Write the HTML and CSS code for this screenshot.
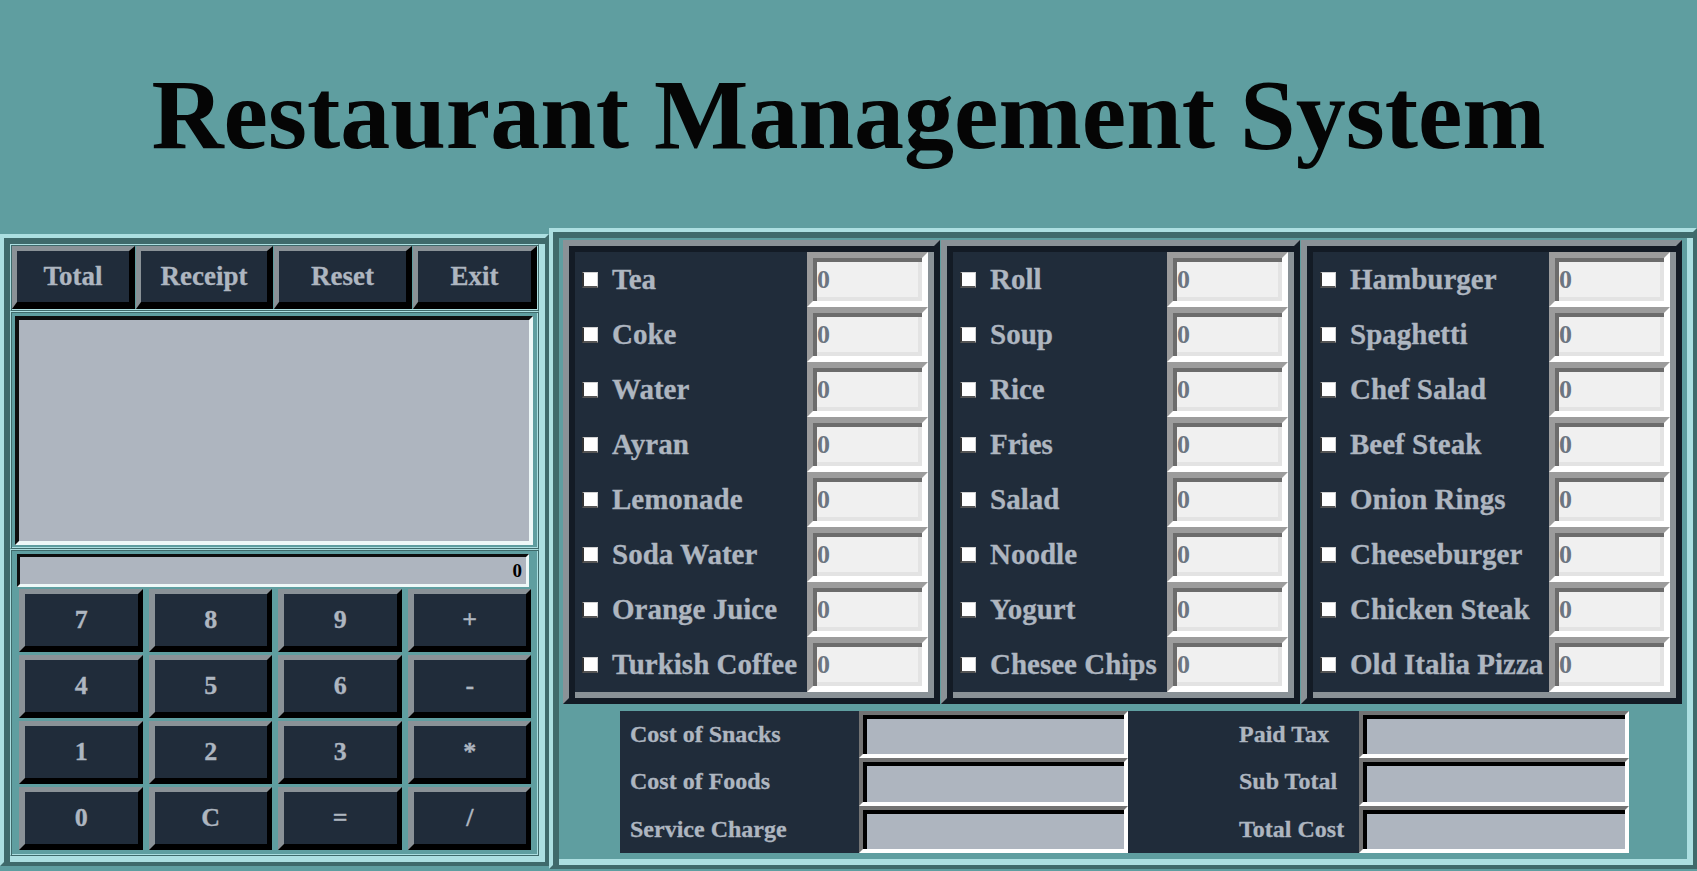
FILE: index.html
```html
<!DOCTYPE html>
<html lang="en">
<head>
    <meta charset="UTF-8">
    <meta name="viewport" content="width=device-width, initial-scale=1.0">
    <title>Restaurant Management System</title>
    <link rel="stylesheet" href="styles.css">
</head>
<body>

    <div class="title-bar">
        <h1>Restaurant Management System</h1>
    </div>

    <div class="workspace">

        <!-- Left: actions, receipt, calculator -->
        <div class="left-frame">
            <div class="action-bar">
                <button class="action-button">Total</button>
                <button class="action-button">Receipt</button>
                <button class="action-button">Reset</button>
                <button class="action-button">Exit</button>
            </div>

            <div class="receipt-frame">
                <textarea class="receipt"></textarea>
            </div>

            <div class="calc-frame">
                <input type="text" class="calc-display" value="0" readonly>
                <div class="calc-keys">
                    <button class="key">7</button>
                    <button class="key">8</button>
                    <button class="key">9</button>
                    <button class="key">+</button>
                    <button class="key">4</button>
                    <button class="key">5</button>
                    <button class="key">6</button>
                    <button class="key">-</button>
                    <button class="key">1</button>
                    <button class="key">2</button>
                    <button class="key">3</button>
                    <button class="key">*</button>
                    <button class="key">0</button>
                    <button class="key">C</button>
                    <button class="key">=</button>
                    <button class="key">/</button>
                </div>
            </div>
        </div>

        <!-- Right: menu and costs -->
        <div class="right-frame">
            <div class="menu-row">
                <div class="menu-panel drinks">
                    <label class="item"><input type="checkbox">Tea</label>
                    <input type="text" class="qty" value="0">
                    <label class="item"><input type="checkbox">Coke</label>
                    <input type="text" class="qty" value="0">
                    <label class="item"><input type="checkbox">Water</label>
                    <input type="text" class="qty" value="0">
                    <label class="item"><input type="checkbox">Ayran</label>
                    <input type="text" class="qty" value="0">
                    <label class="item"><input type="checkbox">Lemonade</label>
                    <input type="text" class="qty" value="0">
                    <label class="item"><input type="checkbox">Soda Water</label>
                    <input type="text" class="qty" value="0">
                    <label class="item"><input type="checkbox">Orange Juice</label>
                    <input type="text" class="qty" value="0">
                    <label class="item"><input type="checkbox">Turkish Coffee</label>
                    <input type="text" class="qty" value="0">
                </div>

                <div class="menu-panel snacks">
                    <label class="item"><input type="checkbox">Roll</label>
                    <input type="text" class="qty" value="0">
                    <label class="item"><input type="checkbox">Soup</label>
                    <input type="text" class="qty" value="0">
                    <label class="item"><input type="checkbox">Rice</label>
                    <input type="text" class="qty" value="0">
                    <label class="item"><input type="checkbox">Fries</label>
                    <input type="text" class="qty" value="0">
                    <label class="item"><input type="checkbox">Salad</label>
                    <input type="text" class="qty" value="0">
                    <label class="item"><input type="checkbox">Noodle</label>
                    <input type="text" class="qty" value="0">
                    <label class="item"><input type="checkbox">Yogurt</label>
                    <input type="text" class="qty" value="0">
                    <label class="item"><input type="checkbox">Chesee Chips</label>
                    <input type="text" class="qty" value="0">
                </div>

                <div class="menu-panel foods">
                    <label class="item"><input type="checkbox">Hamburger</label>
                    <input type="text" class="qty" value="0">
                    <label class="item"><input type="checkbox">Spaghetti</label>
                    <input type="text" class="qty" value="0">
                    <label class="item"><input type="checkbox">Chef Salad</label>
                    <input type="text" class="qty" value="0">
                    <label class="item"><input type="checkbox">Beef Steak</label>
                    <input type="text" class="qty" value="0">
                    <label class="item"><input type="checkbox">Onion Rings</label>
                    <input type="text" class="qty" value="0">
                    <label class="item"><input type="checkbox">Cheeseburger</label>
                    <input type="text" class="qty" value="0">
                    <label class="item"><input type="checkbox">Chicken Steak</label>
                    <input type="text" class="qty" value="0">
                    <label class="item"><input type="checkbox">Old Italia Pizza</label>
                    <input type="text" class="qty" value="0">
                </div>
            </div>

            <div class="cost-frame">
                <span class="cost-label">Cost of Snacks</span>
                <input type="text" class="cost-field" readonly>
                <span class="cost-label right">Paid Tax</span>
                <input type="text" class="cost-field" readonly>

                <span class="cost-label">Cost of Foods</span>
                <input type="text" class="cost-field" readonly>
                <span class="cost-label right">Sub Total</span>
                <input type="text" class="cost-field" readonly>

                <span class="cost-label">Service Charge</span>
                <input type="text" class="cost-field" readonly>
                <span class="cost-label right">Total Cost</span>
                <input type="text" class="cost-field" readonly>
            </div>
        </div>

    </div>

</body>
</html>
```

FILE: styles.css
```css
body {
    margin: 0;
    background-color: #5f9ea0;
    font-family: "Liberation Serif", "Times New Roman", serif;
    overflow: hidden;
}

.title-bar {
    height: 228px;
    box-sizing: border-box;
    padding-top: 57px;
    text-align: center;
}

.title-bar h1 {
    margin: 0;
    font-size: 100px;
    line-height: 115px;
    font-weight: bold;
    color: #050505;
}

.workspace {
    display: flex;
    align-items: flex-start;
}

/* Ridge frames */
.left-frame, .right-frame {
    box-sizing: border-box;
    border: 4px solid;
    border-color: #acdfe1 #3f6a6b #3f6a6b #acdfe1;
    box-shadow: inset 6px 6px 0 #3f6a6b, inset -6px -6px 0 #acdfe1;
}

.left-frame {
    width: 549px;
    height: 632px;
    margin-top: 6px;
    padding: 6px;
    display: flex;
    flex-direction: column;
}

.action-bar, .receipt-frame, .calc-frame {
    box-sizing: border-box;
    border: 1px solid;
    border-color: #acdfe1 #3f6a6b #3f6a6b #acdfe1;
    box-shadow: inset 1px 1px 0 #3f6a6b, inset -1px -1px 0 #acdfe1;
}

.action-bar {
    height: 67px;
    padding: 1px;
    display: grid;
    grid-template-columns: 122fr 136fr 137fr 123fr;
    gap: 1px;
}

.action-button, .key {
    background-color: #202c3a;
    color: #aeb6c0;
    font-family: "Liberation Serif", "Times New Roman", serif;
    font-weight: bold;
    border-style: solid;
    border-width: 5px 6px 7px 5px;
    border-color: #8a9297 #000 #000 #8a9297;
    padding: 0;
    cursor: pointer;
    -webkit-text-stroke: 0.3px #aeb6c0;
}

.action-button {
    font-size: 27px;
}

.receipt-frame {
    height: 238px;
    padding: 4px 5px 3px 4px;
}

.receipt {
    display: block;
    width: 100%;
    height: 100%;
    box-sizing: border-box;
    resize: none;
    background-color: #aeb5bf;
    border: 4px solid;
    border-color: #0e0e0e #eef8f8 #eef8f8 #0e0e0e;
    outline: none;
}

.calc-frame {
    height: 307px;
    padding: 4px 9px 3px 6px;
    display: flex;
    flex-direction: column;
    gap: 2px;
}

.calc-display {
    height: 33px;
    box-sizing: border-box;
    background-color: #aeb5bf;
    border: 3px solid;
    border-color: #0e0e0e #eef8f8 #eef8f8 #0e0e0e;
    text-align: right;
    padding: 0 4px 0 0;
    font-family: "Liberation Serif", "Times New Roman", serif;
    font-size: 19px;
    font-weight: bold;
    color: #000;
    outline: none;
}

.calc-keys {
    margin: 0 -2px 0 2px;
    display: grid;
    grid-template-columns: repeat(4, 1fr);
    grid-template-rows: repeat(4, 63px);
    gap: 3px 6px;
}

.key {
    font-size: 26px;
    border-width: 5px 5px 6px 6px;
}

/* Right side */
.right-frame {
    width: 1148px;
    height: 641px;
    padding: 8px 11px 6px 10px;
}

.menu-row {
    display: flex;
    gap: 1px;
    height: 464px;
}

.menu-panel {
    box-sizing: border-box;
    background-color: #202c3a;
    border: 6px solid;
    border-color: #8a9297 #131b25 #131b25 #8a9297;
    box-shadow: inset 6px 6px 0 #131b25, inset -6px -6px 0 #8a9297;
    padding: 6px;
    display: grid;
    grid-template-columns: 1fr 121px;
    grid-auto-rows: 55px;
}

.drinks { width: 377px; }
.snacks { width: 359px; }
.foods { width: 381px; }

.item {
    display: flex;
    align-items: center;
    padding-left: 7px;
    font-size: 29px;
    font-weight: bold;
    color: #aeb6c0;
    white-space: nowrap;
    -webkit-text-stroke: 0.3px #aeb6c0;
}

.item input {
    -webkit-appearance: none;
    appearance: none;
    width: 16px;
    height: 16px;
    margin: 0 14px 0 0;
    box-sizing: border-box;
    background-color: #fff;
    border-style: solid;
    border-width: 1px 1px 2px 2px;
    border-color: #d0d0d0 #d0d0d0 #555 #333;
}

.qty {
    box-sizing: border-box;
    width: 121px;
    height: 55px;
    background-color: #f0f0f0;
    border: 6px solid;
    border-color: #9c9c9c #fff #fff #9c9c9c;
    box-shadow: inset 4px 4px 0 #6c6c6c, inset -4px -4px 0 #e3e3e3;
    padding: 0 0 0 4px;
    font-family: "Liberation Serif", "Times New Roman", serif;
    font-size: 26px;
    font-weight: bold;
    color: #6c7580;
    outline: none;
}

.cost-frame {
    margin: 7px 0 0 57px;
    width: 1009px;
    height: 142px;
    background-color: #202c3a;
    display: grid;
    grid-template-columns: 239px 269px 231px 270px;
    grid-template-rows: repeat(3, 1fr);
}

.cost-label {
    display: flex;
    align-items: center;
    padding-left: 10px;
    font-size: 24px;
    font-weight: bold;
    color: #aeb6c0;
    white-space: nowrap;
    -webkit-text-stroke: 0.3px #aeb6c0;
}

.cost-label.right {
    padding-left: 111px;
}

.cost-field {
    box-sizing: border-box;
    width: 100%;
    height: 100%;
    background-color: #aeb5bf;
    border: 4px solid;
    border-color: #737373 #fff #fff #737373;
    box-shadow: inset 4px 4px 0 #000;
    outline: none;
}
```
